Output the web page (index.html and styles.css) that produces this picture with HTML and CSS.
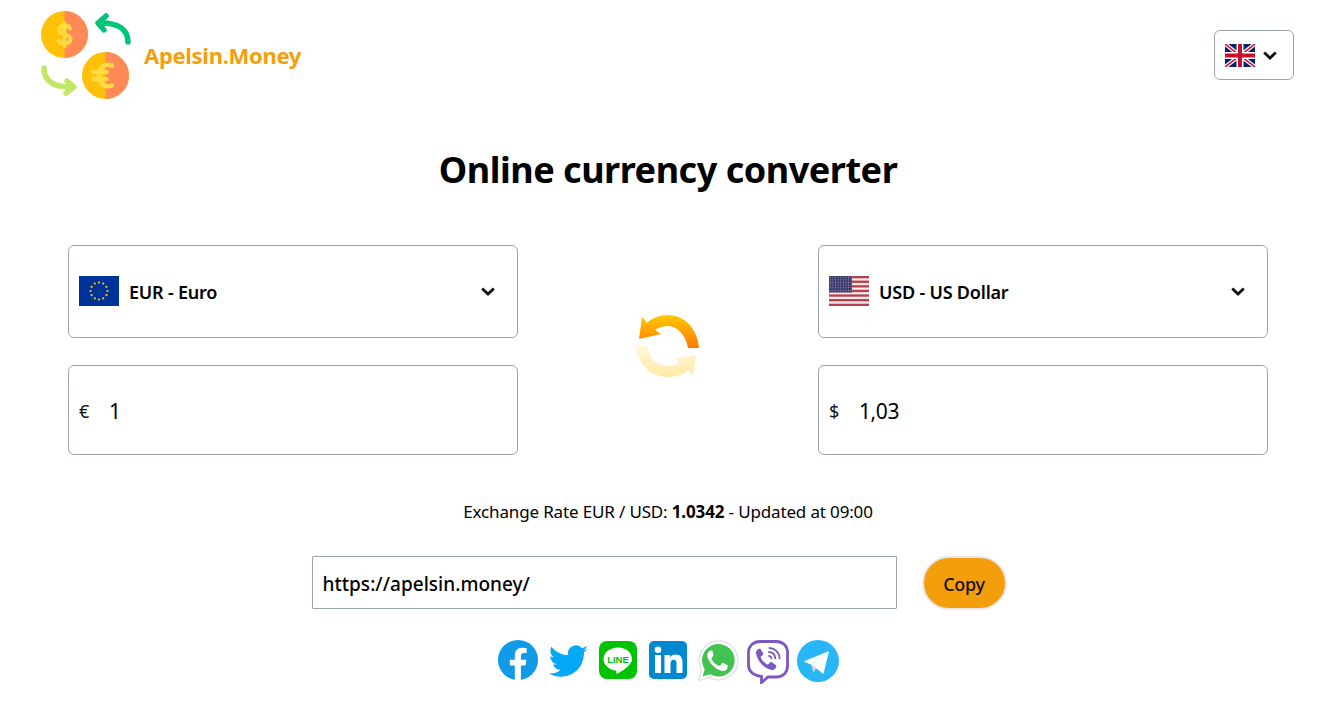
FILE: index.html
```html
<!DOCTYPE html>
<html lang="en">
<head>
<meta charset="utf-8">
<title>Apelsin.Money</title>
<link rel="stylesheet" href="styles.css">
</head>
<body>
<div class="page">
  <header class="header">
    <a class="brand">
      <svg class="logo" viewBox="0 0 90 90" width="90" height="90">
        <circle cx="23.500" cy="24.500" r="23.500" fill="#ffc107"/>
        <path d="M23.500 1a23.500 23.500 0 0 1 0 47z" fill="#ff8a58"/>
        <path d="M29 18.500c-.6-2-2.800-3-5.500-3-3 0-5.500 1.600-5.500 4.500 0 6 11.500 3 11.500 9 0 3-2.500 4.800-6 4.800-2.700 0-5-1.100-6-3.300M23.500 13v23" fill="none" stroke="#ffdb3f" stroke-width="4" stroke-linecap="round"/>
        <path d="M87 32C87 20 78 13 60 13" fill="none" stroke="#00c476" stroke-width="5.500" stroke-linecap="round"/>
        <path d="M65 6 L57 13 L63 20" fill="none" stroke="#00c476" stroke-width="5.500" stroke-linecap="round" stroke-linejoin="round"/>
        <circle cx="64.500" cy="65.500" r="23.500" fill="#ffc107"/>
        <path d="M64.500 42a23.500 23.500 0 0 1 0 47z" fill="#ff8a58"/>
        <path d="M71 55.500c-7-2.500-12.500 1-13.500 10 1 9 6.500 12.500 13.500 10M52.500 62h13M52.500 69h13" fill="none" stroke="#ffdb3f" stroke-width="4.500" stroke-linecap="round"/>
        <path d="M3 58C3 70 11 77 30 77" fill="none" stroke="#c2e768" stroke-width="5.500" stroke-linecap="round"/>
        <path d="M26 71 L33 77 L25 83" fill="none" stroke="#c2e768" stroke-width="5.500" stroke-linecap="round" stroke-linejoin="round"/>
      </svg>
      <span class="brand-name">Apelsin.Money</span>
    </a>
    <button class="lang">
      <svg class="flag-uk" viewBox="0 0 60 46" width="30" height="23">
        <rect width="60" height="46" fill="#012169"/>
        <path d="M0 0L60 46M60 0L0 46" stroke="#fff" stroke-width="8"/>
        <path d="M0 0L60 46M60 0L0 46" stroke="#c8102e" stroke-width="3"/>
        <path d="M30 0V46M0 23H60" stroke="#fff" stroke-width="14"/>
        <path d="M30 0V46M0 23H60" stroke="#c8102e" stroke-width="8"/>
      </svg>
      <svg class="chev" viewBox="0 0 14 9" width="14" height="9"><path d="M1.200 1.500L7 7l5.800-5.500" fill="none" stroke="#111" stroke-width="2.800"/></svg>
    </button>
  </header>

  <h1 class="title">Online currency converter</h1>

  <section class="converter">
    <div class="select select-from">
      <svg class="flag" viewBox="0 0 40 30" width="40" height="30">
        <rect width="40" height="30" fill="#003399"/>
        <g fill="#ffcc00">
          <circle cx="20" cy="6.500" r="1.100"/><circle cx="24.200" cy="7.600" r="1.100"/><circle cx="27.400" cy="10.800" r="1.100"/><circle cx="28.500" cy="15" r="1.100"/><circle cx="27.400" cy="19.200" r="1.100"/><circle cx="24.200" cy="22.400" r="1.100"/><circle cx="20" cy="23.500" r="1.100"/><circle cx="15.800" cy="22.400" r="1.100"/><circle cx="12.600" cy="19.200" r="1.100"/><circle cx="11.500" cy="15" r="1.100"/><circle cx="12.600" cy="10.800" r="1.100"/><circle cx="15.800" cy="7.600" r="1.100"/>
        </g>
      </svg>
      <span class="select-label">EUR - Euro</span>
      <svg class="chev chev-end" viewBox="0 0 14 9" width="14" height="9"><path d="M1.200 1.500L7 7l5.800-5.500" fill="none" stroke="#111" stroke-width="2.800"/></svg>
    </div>

    <div class="swap">
      <svg viewBox="0 0 64 64" width="64" height="64">
        <defs>
          <linearGradient id="swapTop" x1="0" y1="0" x2="0" y2="1"><stop offset="0" stop-color="#ffc800"/><stop offset="1" stop-color="#ff7a00"/></linearGradient>
          <linearGradient id="swapBot" x1="0" y1="0" x2="0" y2="1"><stop offset="0" stop-color="#fff8d8"/><stop offset="1" stop-color="#ffe9a6"/></linearGradient>
        </defs>
        <path d="M63 33H52C50 20 41 11 32 11C27 11 23 12 19 15L25 19L3 24L6 2L11 8C16 3 24 0 32 0C49 0 62 15 63 33z" fill="url(#swapTop)"/>
        <path d="M0 30H11C13 43 21 51 31 51C36 51 40 50 44 47L39 44L60 40L57 60L52 55C47 60 39 62 31 62C14 62 1 48 0 30z" fill="url(#swapBot)"/>
      </svg>
    </div>

    <div class="select select-to">
      <svg class="flag" viewBox="0 0 40 30" width="40" height="30">
        <defs>
          <pattern id="stars" width="2.600" height="2.600" patternUnits="userSpaceOnUse"><circle cx="1.300" cy="1.300" r=".55" fill="#9ea3c4"/></pattern>
        </defs>
        <rect width="40" height="30" fill="#f4eaea"/>
        <g fill="#b8404e">
          <rect width="40" height="2.300"/><rect y="4.600" width="40" height="2.300"/><rect y="9.200" width="40" height="2.300"/><rect y="13.800" width="40" height="2.300"/><rect y="18.400" width="40" height="2.300"/><rect y="23" width="40" height="2.300"/><rect y="27.700" width="40" height="2.300"/>
        </g>
        <rect width="23" height="16.500" fill="#3c3b6e"/>
        <rect width="23" height="16.500" fill="url(#stars)"/>
      </svg>
      <span class="select-label">USD - US Dollar</span>
      <svg class="chev chev-end" viewBox="0 0 14 9" width="14" height="9"><path d="M1.200 1.500L7 7l5.800-5.500" fill="none" stroke="#111" stroke-width="2.800"/></svg>
    </div>

    <div class="amount">
      <span class="currency">€</span>
      <span class="value">1</span>
    </div>
    <div class="amount amount-to">
      <span class="currency">$</span>
      <span class="value">1,03</span>
    </div>
  </section>

  <p class="rate">Exchange Rate EUR / USD: <b>1.0342</b> - Updated at 09:00</p>

  <div class="share">
    <div class="url">https://apelsin.money/</div>
    <button class="copy">Copy</button>
  </div>

  <div class="social">
    <svg class="s40" viewBox="0 0 40 40" width="40" height="40"><circle cx="20" cy="20" r="20" fill="#0f9be8"/><path d="M27.500 25.500l.9-5.700h-5.500v-3.700c0-1.600.8-3.100 3.200-3.100h2.500V8.100s-2.200-.4-4.400-.4c-4.500 0-7.400 2.700-7.400 7.700v4.400h-5v5.700h5V40h6.100V25.500z" fill="#fff"/></svg>
    <svg class="s40" viewBox="0 0 40 40" width="40" height="40"><path d="M40 9.100c-1.400.7-2.900 1.100-4.500 1.300 1.600-1 2.900-2.500 3.500-4.300-1.500.9-3.200 1.600-5 1.900a8 8 0 0 0-13.700 7.300C13.600 15 7.500 11.700 3.400 6.700c-2 3.600-1 8.200 2.500 10.500-1.300 0-2.500-.4-3.600-1 0 3.900 2.700 7.200 6.400 8-1.200.3-2.400.4-3.600.1 1 3.200 4 5.500 7.500 5.600A16.300 16.300 0 0 1 .8 33.300 23 23 0 0 0 36 13v-1c1.600-1 3-2.300 4-3z" fill="#03a9f4"/></svg>
    <svg class="s40" viewBox="0 0 40 40" width="40" height="40"><rect x="1" y="1" width="38" height="38" rx="8" fill="#00c200"/><path d="M20 7.500c-8 0-14.500 5-14.500 11.500 0 5.800 5.200 10.700 12.200 11.400.9.200.7 1.300.5 2.400-.1.900.4 1.200 1.200.8 2.200-1.100 8.900-5 11.700-8.600 1.800-2 2.900-3.700 2.900-6 0-6.500-6-11.500-14-11.500z" fill="#fff"/><text x="20" y="22.800" text-anchor="middle" class="line-text">LINE</text></svg>
    <svg class="s40" viewBox="0 0 40 40" width="40" height="40"><rect x="1" y="1" width="38" height="38" rx="5" fill="#0288d1"/><path d="M7 15h6v18H7zM10 6.500a3.300 3.300 0 1 1 0 6.600 3.300 3.300 0 0 1 0-6.600zM16.500 15H22v2.500c1-1.700 3-3 5.800-3 5 0 6.700 3.300 6.700 8.300V33h-6v-9.500c0-2.300-.7-3.800-2.800-3.800-2.300 0-3.200 1.800-3.200 3.800V33h-6z" fill="#fff"/></svg>
    <svg viewBox="0 0 42 42" width="42" height="42"><path d="M1.500 40.500l3-10.500A19.500 19.500 0 1 1 12 37.500z" fill="#fff" stroke="#dfe5e7" stroke-width="1.500"/><path d="M5.500 36.500l2.200-7.300A16.300 16.300 0 1 1 13 34.300z" fill="#40c351"/><path d="M15.800 11.800c-.6-1.300-1.100-1.300-1.900-1.300-2 .2-3.600 2-3.600 4.800 0 5.600 7.500 13.800 13.800 15.500 3.600.9 6.200-1.300 6.500-3.600.2-1.500.2-2-.4-2.300l-3.900-1.900c-.6-.3-1-.1-1.500.5l-1.600 2c-.4.400-.8.500-1.400.2-3.500-1.500-5.900-4-7.300-6.800-.3-.5-.1-.9.300-1.300l1.200-1.400c.4-.5.400-1 .2-1.500z" fill="#fff"/></svg>
    <svg viewBox="0 0 42 44" width="42" height="44"><path d="M13 1.500h16c7 0 11.500 4.500 11.500 11v13.500c0 6.500-4.500 11-11.500 11h-8l-6.500 5.500v-6c-7.500-1-13-4.700-13-11.700V12.500c0-6.500 5-11 11.500-11z" fill="#fff" stroke="#7d57c2" stroke-width="2.800"/><path d="M12.500 8.500c-1.500.2-3.800 2.200-3.500 4.500 1.200 8 8 15.200 15.500 17 2 .5 4.500-1.800 4.800-3.300.2-1-.4-1.500-1-2l-3.400-2.400c-.9-.6-1.700-.4-2.300.4l-1 1.300c-.5.500-1.100.5-1.700.2-2.800-1.500-4.700-3.600-6-6.300-.3-.7-.1-1.200.4-1.700l1.200-1c.8-.7.900-1.400.4-2.300l-2-3.400c-.5-.8-1.300-1.200-2.400-1z" fill="#7d57c2"/><path d="M22 12c3.500.3 6 2.800 6.300 6.300M22.500 8c5.800.4 9.800 4.500 10.200 10.300" fill="none" stroke="#7d57c2" stroke-width="1.800" stroke-linecap="round"/><path d="M22 15.800c1.400.2 2.300 1.100 2.500 2.500" fill="none" stroke="#7d57c2" stroke-width="1.800" stroke-linecap="round"/></svg>
    <svg viewBox="0 0 42 42" width="42" height="42"><circle cx="21" cy="21" r="21" fill="#29b6f6"/><path d="M32 11L6.500 21.500l7.500 3z" fill="#fff"/><path d="M32 11L14 24.500l12.500 9.500z" fill="#fff"/><path d="M14 24.500l2.500 8 2.500-4 7.500 5.500L17 26z" fill="#cfd8dc"/></svg>
  </div>
</div>
</body>
</html>
```
FILE: styles.css
```css
* { box-sizing: border-box; }
html, body { margin: 0; padding: 0; background: #fff; }
body { font-family: "Noto Sans", "Open Sans", "Liberation Sans", sans-serif; color: #000; overflow: hidden; }
svg { display: block; flex: none; }
.page { width: 1336px; height: 705px; display: flex; flex-direction: column; align-items: center; }

.header { width: 100%; height: 110px; display: flex; justify-content: space-between; align-items: center; padding: 0 42px 0 41px; }
.brand { display: flex; align-items: center; gap: 13px; }
.brand-name { font-size: 22px; font-weight: 700; color: #f59e0b; letter-spacing: -.3px; margin-top: 0; }
.lang { width: 80px; height: 50px; border: 1px solid #9ca3af; border-radius: 6px; background: #fff; display: flex; align-items: center; padding: 0 0 0 10px; gap: 8px; }

.title { margin: 37px 0 0; height: 46px; line-height: 46px; font-size: 36px; font-weight: 700; letter-spacing: -.47px; text-align: center; }

.converter { margin-top: 52px; display: grid; grid-template-columns: 450px 300px 450px; grid-template-rows: 93px 90px; row-gap: 27px; }
.select, .amount { border: 1px solid #9ca3af; border-radius: 6px; display: flex; align-items: center; padding: 0 10px; background: #fff; }
.flag { margin-top: -2px; }
.select-label { margin-left: 10px; font-size: 18px; font-weight: 600; letter-spacing: -.2px; margin-top: 1px; flex: 1; }
.chev-end { margin: 0 12px 0 0; }
.swap { grid-row: 1 / span 2; grid-column: 2; display: flex; align-items: center; justify-content: center; padding-bottom: 7px; }
.select-to { grid-column: 3; grid-row: 1; }
.amount { grid-column: 1; grid-row: 2; }
.amount-to { grid-column: 3; }
.currency { width: 30px; font-size: 18px; color: #111; margin-top: 1px; }
.value { font-size: 21px; letter-spacing: -.4px; margin-top: 1px; }

.rate { margin: 45px 0 0; height: 24px; line-height: 24px; font-size: 17px; letter-spacing: -.15px; text-align: center; }
.rate b { font-weight: 700; }

.share { margin-top: 32px; margin-right: 18px; display: flex; align-items: flex-start; gap: 25px; }
.url { width: 585px; height: 53px; line-height: 55px; border: 1px solid #9ca3af; border-radius: 1px; padding: 0 10px; font-size: 19px; letter-spacing: .03px; font-weight: 500; }
.copy { width: 85px; height: 54px; border: 2px solid #e5e7eb; border-radius: 27px; background: #f59e0b; font: 500 18px "Noto Sans", sans-serif; letter-spacing: -.3px; color: #111; padding: 2px 0 0; }

.social { margin-top: 30px; display: flex; gap: 8px; align-items: flex-start; }
.s40 { margin: 0 1px; }
.line-text { font: 700 9.5px "Liberation Sans", sans-serif; fill: #00c200; }
```
